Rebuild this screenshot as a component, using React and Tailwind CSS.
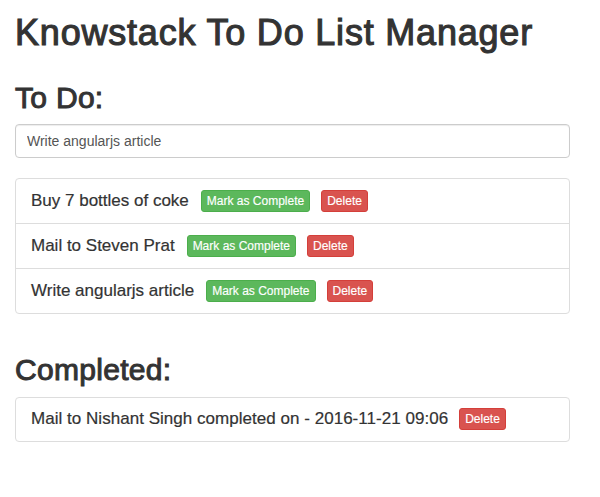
import { useState } from 'react';

const initialTodos = [
  'Buy 7 bottles of coke',
  'Mail to Steven Prat',
  'Write angularjs article',
];

const initialDone = [
  { text: 'Mail to Nishant Singh', at: '2016-11-21 09:06' },
];

function XsButton({ kind, children, onClick, className = '' }) {
  const colors =
    kind === 'success'
      ? 'bg-[#5cb85c] border-[#4cae4c]'
      : 'bg-[#d9534f] border-[#d43f3a]';
  return (
    <button
      type="button"
      onClick={onClick}
      className={`${colors} ${className} border rounded-[3px] px-[5px] py-px text-[12px] leading-[18px] text-white [-webkit-text-stroke:0.15px_#fff]`}
    >
      {children}
    </button>
  );
}

export default function App() {
  const [input, setInput] = useState('Write angularjs article');
  const [todos, setTodos] = useState(initialTodos);
  const [done, setDone] = useState(initialDone);

  const complete = (i) => {
    setDone([...done, { text: todos[i], at: '2016-11-21 09:06' }]);
    setTodos(todos.filter((_, j) => j !== i));
  };

  return (
    <div className="min-h-[497px] bg-white pl-[15px] pr-[30px] text-[#333] font-['Liberation_Sans',Arial,sans-serif]">
      <h1 className="pt-[13px] text-[36px] leading-[39.6px] tracking-[0.8px] [-webkit-text-stroke:1.1px_#333]">
        Knowstack To Do List Manager
      </h1>

      <h2 className="mt-[28px] text-[30px] leading-[33px] tracking-[0.3px] [-webkit-text-stroke:1px_#333]">
        To Do:
      </h2>
      <input
        type="text"
        value={input}
        onChange={(e) => setInput(e.target.value)}
        className="mt-[10px] block h-[34px] w-full rounded-[4px] border border-[#ccc] px-[11px] text-[14px] text-[#555] shadow-[inset_0_1px_1px_rgba(0,0,0,0.075)] outline-none"
      />

      <ul className="mt-[20px] rounded-[4px] border border-[#ddd]">
        {todos.map((t, i) => (
          <li
            key={t}
            className={`flex items-center px-[15px] text-[17px] ${i > 0 ? 'h-[45px] border-t border-[#ddd]' : 'h-[44px]'}`}
          >
            <span className="[-webkit-text-stroke:0.2px_#333]">{t}</span>
            <XsButton kind="success" className="ml-[12px]" onClick={() => complete(i)}>
              Mark as Complete
            </XsButton>
            <XsButton
              kind="danger"
              className="ml-[11px]"
              onClick={() => setTodos(todos.filter((_, j) => j !== i))}
            >
              Delete
            </XsButton>
          </li>
        ))}
      </ul>

      <h2 className="mt-[39px] text-[30px] leading-[33px] tracking-[0.3px] [-webkit-text-stroke:1px_#333]">
        Completed:
      </h2>
      <ul className="mt-[11px] rounded-[4px] border border-[#ddd]">
        {done.map((d, i) => (
          <li
            key={d.text + i}
            className={`flex h-[43px] items-center px-[15px] text-[17px] ${i > 0 ? 'border-t border-[#ddd]' : ''}`}
          >
            <span className="tracking-[0.03px] [-webkit-text-stroke:0.2px_#333]">
              {d.text} completed on - {d.at}
            </span>
            <XsButton
              kind="danger"
              className="ml-[11px]"
              onClick={() => setDone(done.filter((_, j) => j !== i))}
            >
              Delete
            </XsButton>
          </li>
        ))}
      </ul>
    </div>
  );
}
